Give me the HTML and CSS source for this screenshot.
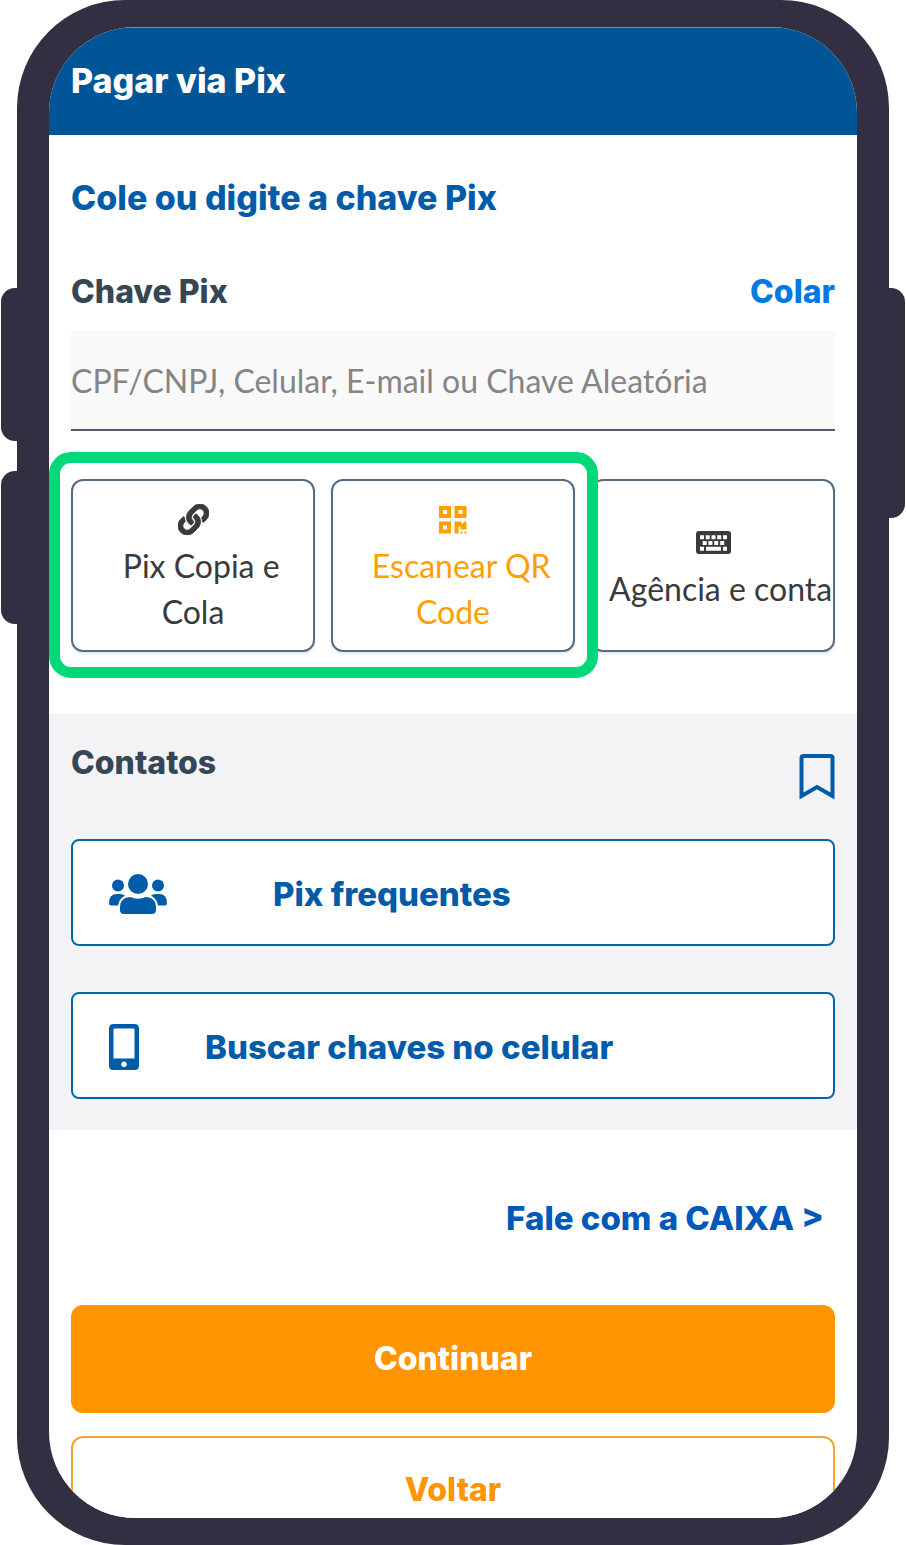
FILE: index.html
```html
<!DOCTYPE html>
<html lang="pt-BR">
<head>
<meta charset="utf-8">
<meta name="viewport" content="width=device-width, initial-scale=1">
<title>Pagar via Pix</title>
<link rel="stylesheet" href="styles.css">
</head>
<body>
<div class="phone">
  <span class="side-key side-key-up"></span>
  <span class="side-key side-key-down"></span>
  <span class="side-key side-key-power"></span>
  <div class="screen">
    <header class="topbar"><h1 class="topbar-title">Pagar via Pix</h1></header>

    <main>
      <section class="key-section">
        <h2 class="headline">Cole ou digite a chave Pix</h2>
        <div class="field-head">
          <label class="field-label" for="pix-key">Chave Pix</label>
          <button class="paste" type="button">Colar</button>
        </div>
        <input class="field" id="pix-key" type="text" placeholder="CPF/CNPJ, Celular, E-mail ou Chave Aleatória">

        <div class="tiles">
          <button class="tile" type="button">
            <span class="tile-icon">
              <svg width="31" height="31" viewBox="0 0 512 512" fill="currentColor" stroke="currentColor" stroke-width="14" aria-hidden="true"><path d="M326.612 185.391c59.747 59.809 58.927 155.698.36 214.59-.11.12-.24.25-.36.37l-67.2 67.2c-59.27 59.27-155.699 59.262-214.96 0-59.27-59.26-59.27-155.7 0-214.96l37.106-37.106c9.84-9.84 26.786-3.3 27.294 10.606.648 17.722 3.826 35.527 9.69 52.721 1.986 5.822.567 12.262-3.783 16.612l-13.087 13.087c-28.026 28.026-28.905 73.66-1.155 101.96 28.024 28.579 74.086 28.749 102.325.51l67.2-67.19c28.191-28.191 28.073-73.757 0-101.83-3.701-3.694-7.429-6.564-10.341-8.569a16.037 16.037 0 0 1-6.947-12.606c-.396-10.567 3.348-21.456 11.698-29.806l21.054-21.055c5.521-5.521 14.182-6.199 20.584-1.731a152.482 152.482 0 0 1 20.522 17.197zM467.547 44.449c-59.261-59.262-155.69-59.27-214.96 0l-67.2 67.2c-.12.12-.25.25-.36.37-58.566 58.892-59.387 154.781.36 214.59a152.454 152.454 0 0 0 20.521 17.196c6.402 4.468 15.064 3.789 20.584-1.731l21.054-21.055c8.35-8.35 12.094-19.239 11.698-29.806a16.037 16.037 0 0 0-6.947-12.606c-2.912-2.005-6.64-4.875-10.341-8.569-28.073-28.073-28.191-73.639 0-101.83l67.2-67.19c28.239-28.239 74.3-28.069 102.325.51 27.75 28.3 26.872 73.934-1.155 101.96l-13.087 13.087c-4.35 4.35-5.769 10.79-3.783 16.612 5.864 17.194 9.042 34.999 9.69 52.721.509 13.906 17.454 20.446 27.294 10.606l37.106-37.106c59.271-59.259 59.271-155.699.001-214.959z"/></svg>
            </span>
            <span class="tile-text">&nbsp;&nbsp;Pix Copia e<br>Cola</span>
          </button>
          <button class="tile tile-scan" type="button">
            <span class="tile-icon">
              <svg width="28" height="28" viewBox="0 0 28 28" fill="currentColor" aria-hidden="true"><path fill-rule="evenodd" d="M0 0h12v12H0zM4 4v4h4V4zM15.500 0h12v12h-12zM19.500 4v4h4V4zM0 15.500h12v12H0zM4 19.500v4h4v-4z"/><path d="M15.500 15.500h7v2h2v-2h3v8h-6v-3h-2v7h-4zM21.500 25.500h2v2h-2zM25.500 25.500h2v2h-2z"/></svg>
            </span>
            <span class="tile-text">&nbsp;&nbsp;Escanear QR<br>Code</span>
          </button>
          <button class="tile" type="button">
            <span class="tile-icon">
              <svg width="35" height="23" viewBox="0 0 35 23" aria-hidden="true"><rect width="35" height="23" rx="3" fill="currentColor"/><path fill="#fff" d="M4 4.300h4v4H4zM9.700 4.300h4v4h-4zM15.500 4.300h4v4h-4zM21.200 4.300h4v4h-4zM27 4.300h4v4h-4zM6.700 10h4v4h-4zM12.400 10h4v4h-4zM18.200 10h4v4h-4zM24.200 10h4v4h-4zM4 15.700h4v4H4zM10 15.700h15v4H10zM27 15.700h4v4h-4z"/></svg>
            </span>
            <span class="tile-text">&nbsp;&nbsp;Agência e conta</span>
          </button>
          <span class="spotlight"></span>
        </div>
      </section>

      <section class="contacts">
        <div class="contacts-head">
          <h2 class="contacts-title">Contatos</h2>
          <button class="bookmark" type="button" aria-label="Favoritos">
            <svg width="36" height="47" viewBox="0 0 36 47" fill="none" stroke="currentColor" stroke-width="4" aria-hidden="true"><path d="M2.500 42V4Q2.500 2 4.500 2h27q2 0 2 2V42L18 33z"/></svg>
          </button>
        </div>
        <button class="contact contact-frequent" type="button">
          <svg width="58" height="42" viewBox="0 0 58 42" fill="currentColor" aria-hidden="true"><circle cx="29" cy="11" r="10"/><circle cx="9" cy="12.500" r="6"/><circle cx="49" cy="12.500" r="6"/><path d="M20.500 24q1.500 0 3 .7 5.500 2 11 0 1.500-.7 3-.7 9.500 1 9.500 10v3q0 4-4 4H15q-4 0-4-4v-3q0-9 9.500-10zM0 30q0-9 8-9h3q3 0 5 1.500-6 3.500-7 10H2q-2 0-2-2.500zM58 30q0-9-8-9h-3q-3 0-5 1.500 6 3.500 7 10h7q2 0 2-2.500z"/></svg>
          <span>Pix frequentes</span>
        </button>
        <button class="contact contact-phone" type="button">
          <svg width="30" height="46" viewBox="0 0 30 46" fill="currentColor" aria-hidden="true"><path fill-rule="evenodd" d="M4.500 0h21Q30 0 30 4.500v37q0 4.500-4.500 4.500h-21Q0 46 0 41.500v-37Q0 0 4.500 0zM5.500 4.500Q4.500 4.500 4.500 5.500v29h21v-29q0-1-1-1zM15 37.500a2.800 2.800 0 1 0 .01 0z"/></svg>
          <span>Buscar chaves no celular</span>
        </button>
      </section>

      <section class="actions">
        <a class="talk" href="#">Fale com a CAIXA &gt;</a>
        <button class="action action-primary" type="button">Continuar</button>
        <button class="action action-secondary" type="button">Voltar</button>
      </section>
    </main>
  </div>
</div>
</body>
</html>
```
FILE: styles.css
```css
* {
  box-sizing: border-box;
}

body {
  margin: 0;
  background: #fff;
  font-family: Lato, sans-serif;
  font-size: 32px;
  line-height: 46px;
}

button,
input {
  font: inherit;
  margin: 0;
  cursor: pointer;
}

h1,
h2,
.field-head,
.contact,
.talk,
.action {
  margin: 0;
  font-family: Inter, sans-serif;
  font-size: 32px;
  font-weight: 800;
}

.topbar-title,
.headline {
  font-size: 34px;
}

.contact,
.talk {
  font-size: 33px;
}

svg {
  display: block;
  flex: none;
}

/* Device frame */
.phone {
  position: relative;
  margin: 0 17px;
  padding: 27px 32px;
  border-radius: 108px;
  background: #322f42;
}

.side-key {
  position: absolute;
  width: 16px;
  height: 153px;
  background: #322f42;
}

.side-key-up {
  top: 288px;
  left: -16px;
  border-radius: 14px 0 0 14px;
}

.side-key-down {
  top: 471px;
  left: -16px;
  border-radius: 14px 0 0 14px;
}

.side-key-power {
  top: 288px;
  right: -16px;
  height: 230px;
  border-radius: 0 14px 14px 0;
}

.screen {
  overflow: hidden;
  border-radius: 86px;
  background: #fff;
}

.topbar {
  height: 108px;
  padding: 30px 22px;
  border-top: 1px solid #6d96b8;
  background: #005596;
  color: #fff;
}

/* Pix key */
.key-section {
  padding: 40px 22px 62px;
}

.headline {
  color: #005ca9;
}

.field-head {
  display: flex;
  justify-content: space-between;
  margin: 48px 0 16px;
}

.field-label {
  color: #354656;
}

.paste {
  padding: 0;
  border: 0;
  background: none;
  color: #0079e3;
}

.field {
  display: block;
  width: 100%;
  height: 100px;
  padding: 0;
  border: 0;
  border-bottom: 2px solid #55596a;
  border-radius: 0;
  background: #f9f9f9;
  color: #3a3a3a;
}

.field::placeholder {
  color: #858585;
  opacity: 1;
}

.tiles {
  position: relative;
  display: grid;
  grid-template-columns: repeat(3, 1fr);
  gap: 16px;
  margin-top: 48px;
}

.tile {
  display: flex;
  flex-direction: column;
  align-items: center;
  justify-content: center;
  min-width: 0;
  height: 173px;
  padding: 0;
  border: 2px solid #566b80;
  border-radius: 12px;
  background: #fff;
  box-shadow: 0 2px 3px #e3ebf3;
  color: #3a3a3a;
}

.tile-scan {
  color: #ffa000;
}

.tile-icon {
  display: flex;
  align-items: center;
  height: 46px;
}

.tile-text {
  white-space: nowrap;
}

.spotlight {
  position: absolute;
  inset: -27px calc((100% - 32px) / 3 - 7px) -26px -22px;
  border: 11px solid #00d879;
  border-radius: 22px;
  pointer-events: none;
}

/* Contacts */
.contacts {
  padding: 26px 22px 31px;
  background: #f3f3f6;
  color: #005ca9;
}

.contacts-head {
  display: flex;
  align-items: flex-start;
  justify-content: space-between;
}

.contacts-title {
  color: #354656;
}

.bookmark {
  margin-top: 14px;
  padding: 0;
  border: 0;
  background: none;
  color: #005ca9;
}

.contact {
  display: flex;
  align-items: center;
  width: 100%;
  height: 107px;
  padding: 2px 36px 0;
  border: 2px solid #0068aa;
  border-radius: 8px;
  background: #fff;
  color: #005ca9;
}

.contact-frequent {
  gap: 106px;
  margin: 38px 0 46px;
}

.contact-phone {
  gap: 66px;
}

/* Actions */
.actions {
  display: flex;
  flex-direction: column;
  margin-bottom: -26px;
  padding: 65px 22px 0;
}

.talk {
  align-self: flex-end;
  margin: 0 11px 64px 0;
  color: #0058b8;
  text-decoration: none;
}

.action {
  height: 108px;
  border-radius: 12px;
}

.action-primary {
  margin-bottom: 23px;
  border: 0;
  background: #ff9500;
  color: #fff;
}

.action-secondary {
  border: 2px solid #f2a335;
  background: #fff;
  color: #ff9500;
}
```
